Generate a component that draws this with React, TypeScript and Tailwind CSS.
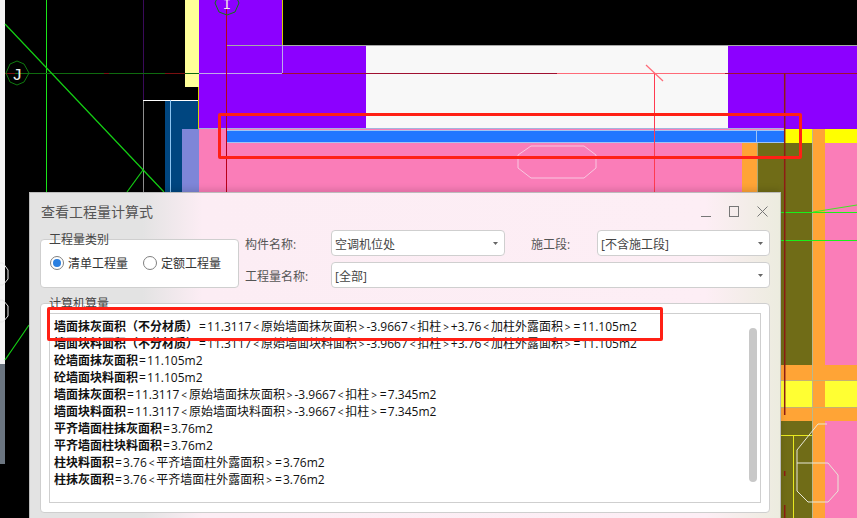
const FONT = "font-['Open_Sans','Noto_Sans_CJK_SC',sans-serif]";

const LINES: { label: string; body: string }[] = [
  { label: "墙面抹灰面积（不分材质）", body: "=11.3117<原始墙面抹灰面积>-3.9667<扣柱>+3.76<加柱外露面积>=11.105m2" },
  { label: "墙面块料面积（不分材质）", body: "=11.3117<原始墙面块料面积>-3.9667<扣柱>+3.76<加柱外露面积>=11.105m2" },
  { label: "砼墙面抹灰面积", body: "=11.105m2" },
  { label: "砼墙面块料面积", body: "=11.105m2" },
  { label: "墙面抹灰面积", body: "=11.3117<原始墙面抹灰面积>-3.9667<扣柱>=7.345m2" },
  { label: "墙面块料面积", body: "=11.3117<原始墙面块料面积>-3.9667<扣柱>=7.345m2" },
  { label: "平齐墙面柱抹灰面积", body: "=3.76m2" },
  { label: "平齐墙面柱块料面积", body: "=3.76m2" },
  { label: "柱块料面积", body: "=3.76<平齐墙面柱外露面积>=3.76m2" },
  { label: "柱抹灰面积", body: "=3.76<平齐墙面柱外露面积>=3.76m2" },
];

// CAD drawing behind the dialog
function CadCanvas() {
  return (
    <svg className="absolute inset-0" width="857" height="518" viewBox="0 0 857 518" shapeRendering="crispEdges">
      <rect x="0" y="0" width="857" height="518" fill="#000" />
      <rect x="0" y="0" width="5" height="364" fill="#f4f4f4" />
      <rect x="0" y="364" width="5" height="100" fill="#6b7580" />

      {/* fills */}
      <rect x="185" y="0" width="14" height="87" fill="#ffff99" />
      <rect x="199" y="0" width="83" height="46" fill="#8c00ff" />
      <rect x="199" y="45" width="167" height="84" fill="#8c00ff" />
      <rect x="366" y="45" width="362" height="84" fill="#f8f8f8" />
      <rect x="728" y="45" width="129" height="84" fill="#8c00ff" />
      <rect x="165" y="100" width="34" height="92" fill="#004680" />
      <rect x="182" y="129" width="17" height="63" fill="#7e86d8" />
      <rect x="199" y="129" width="658" height="389" fill="#fa7db8" />
      <rect x="742" y="143" width="15" height="375" fill="#ffa436" />
      <rect x="757" y="143" width="55" height="375" fill="#706c17" />
      <rect x="825" y="129" width="32" height="14" fill="#ffff00" />
      <rect x="785" y="129" width="27" height="14" fill="#ffff00" />
      <rect x="812" y="129" width="13" height="389" fill="#ffa436" />
      <rect x="742" y="365" width="115" height="15" fill="#ffa436" />
      <rect x="742" y="380" width="115" height="27" fill="#ffff33" />
      <rect x="812" y="380" width="13" height="27" fill="#ffa436" />
      <rect x="742" y="407" width="115" height="14" fill="#ffa436" />
      <rect x="227" y="130" width="558" height="13" fill="#a0c4f4" />
      <rect x="227" y="131" width="558" height="11" fill="#2176ff" />
      <rect x="756" y="130" width="1" height="13" fill="#a0c4f4" />
      <rect x="199" y="128" width="586" height="1" fill="#a3b3dc" />

      {/* outlines */}
      <g fill="none" strokeWidth="1">
        <path d="M46.5 0V192" stroke="#19e619" />
        <path d="M143.5 0V100" stroke="#3a0a5a" />
        <path d="M143.5 100V192" stroke="#8f8f8f" />
        <path d="M143 100.5H199" stroke="#ffffff" />
        <path d="M170.5 100V192" stroke="#8cc4f0" />
        <path d="M198.5 87V129" stroke="#d8d000" />
        <path d="M282.5 0V45" stroke="#d8d000" />
        <path d="M227 45.5H857" stroke="#a8a8a8" />
        <path d="M199 73.5H282V45" stroke="#c0a8e8" />
        <path d="M5 73.5H199" stroke="#0f6a0f" />
        <path d="M5 73.5H15M104 73.5H109M165 73.5H185" stroke="#7a1010" />
        <path d="M282 73.5H557" stroke="#a01030" />
        <path d="M557 73.5H725" stroke="#ff6a78" />
        <path d="M725 73.5H857" stroke="#a01030" />
        <path d="M226.5 0V192" stroke="#b80018" />
        <path d="M654.5 73V192" stroke="#ff3a50" />
        <path d="M757.5 143V518" stroke="#a8a878" />
        <path d="M812.5 129V518" stroke="#b8b890" />
        <path d="M742 380.5H857M742 407.5H857" stroke="#c8b070" />
        <path d="M781 212.5H857M781 240.5H857" stroke="#19f019" />
        <path d="M781 435.5H812M793.5 435V518" stroke="#e8e820" />
      </g>
      <path d="M784.7 73V415M784.7 471V476M784.7 505V518" fill="none" stroke="#8f1c14" strokeWidth="1.5" shapeRendering="geometricPrecision" />
      <g fill="none" shapeRendering="geometricPrecision">
        <path d="M5 24L164 192" stroke="#14d014" strokeWidth="1.2" />
        <path d="M143 170L127 192" stroke="#14d014" strokeWidth="1.2" />
        <path d="M29 325L5 360" stroke="#14d014" strokeWidth="1.2" />
        <path d="M813 212L857 205" stroke="#40e820" />
        <path d="M646 65L663 81" stroke="#ff6a78" strokeWidth="1.2" />
        <path d="M17 61L24 64L29 73L24 82L17 85L10 82L6 73L10 64Z" stroke="#0f7a0f" />
        <path d="M227 -9L235 -6L239 3L235 12L227 15L219 12L215 3L219 -6Z" stroke="#0f7a0f" />
        <path d="M531 146H584L596 155V168L584 178H531L518 168V155Z" stroke="#f8c8e0" />
        <path d="M827 424H818L797 450V491L808 502H828L838 491V475L828 463H797" stroke="#e8e8d8" />
        <path d="M0 263H3L8 270V279L3 285H0M0 300H3L8 306V316L3 322H0" stroke="#e8e8e8" />
      </g>
      <text x="17" y="80" textAnchor="middle" fontSize="17" fill="#ececec" fontFamily="Liberation Mono, monospace">J</text>
      <text x="227" y="9" textAnchor="middle" fontSize="14" fill="#ececec" fontFamily="Liberation Mono, monospace">I</text>
    </svg>
  );
}

function Select({ value, className }: { value: string; className: string }) {
  return (
    <div className={`flex h-[26px] items-center justify-between rounded-[4px] border border-[#cfcfcf] bg-white pl-[3px] pr-[6px] ${className}`}>
      <span className="pt-[3px] text-[12px] text-[#444]">{value}</span>
      <svg width="5" height="3" viewBox="0 0 5 3">
        <path d="M0 0H5L2.5 3Z" fill="#666" />
      </svg>
    </div>
  );
}

function Radio({ checked, label }: { checked?: boolean; label: string }) {
  return (
    <div className="flex items-center gap-[4px]">
      <span className="flex h-[14px] w-[14px] items-center justify-center rounded-full border border-[#808080] bg-white">
        {checked && <span className="h-[8px] w-[8px] rounded-full bg-[#2a7fe0]" />}
      </span>
      <span className="pt-[2px] text-[12px] text-[#333]">{label}</span>
    </div>
  );
}

// the operators in the formulas sit with air on both sides
function Formula({ text }: { text: string }) {
  return (
    <>
      {text.split(/([<>=])/).map((part, i) => {
        if (part === "<" || part === ">") {
          return <span key={i} className="px-[1.9px] text-[10px]">{part}</span>;
        }
        if (part === "=") {
          return <span key={i} className="px-[1.1px]">{part}</span>;
        }
        return <span key={i}>{part}</span>;
      })}
    </>
  );
}

function Dialog() {
  return (
    <div className={`${FONT} absolute left-[29px] top-[192px] flex h-[340px] w-[752px] flex-col border border-[#bcbcbc] bg-[linear-gradient(90deg,#e3e3e3_0%,#e3e3e3_15%,#fcedf4_23%,#fdeef5_90%,#ececdf_100%)] pl-[10px] pr-[10px] shadow-[0_-3px_6px_rgba(0,0,0,0.12)]`}>
      {/* Title bar */}
      <div className="flex h-[37px] shrink-0 items-center justify-between pr-[2px]">
        <span className="pl-[1px] text-[14px] text-[#555]">查看工程量计算式</span>
        <div className="flex items-center gap-[18px] text-[#777]">
          <svg width="10" height="12" viewBox="0 0 10 12" fill="none" stroke="currentColor">
            <path d="M0 10.5H10" />
          </svg>
          <svg width="10" height="11" viewBox="0 0 10 11" fill="none" stroke="currentColor">
            <rect x="0.5" y="0.5" width="9" height="10" />
          </svg>
          <svg width="11" height="11" viewBox="0 0 11 11" fill="none" stroke="currentColor">
            <path d="M0.5 0.5L10.5 10.5M10.5 0.5L0.5 10.5" />
          </svg>
        </div>
      </div>

      {/* Form */}
      <div className="flex shrink-0">
        <div className="relative mt-[9px] flex h-[49px] w-[199px] shrink-0 items-center gap-[15px] rounded-[4px] border border-[#cfcfcf] bg-white pb-[1px] pl-[9px]">
          <span className="absolute left-[8px] top-[-8px] text-[12px] leading-[16px] text-[#444]">工程量类别</span>
          <Radio checked label="清单工程量" />
          <Radio label="定额工程量" />
        </div>
        <div className="ml-[6px] flex flex-col gap-[6px]">
          <div className="flex items-center">
            <span className="w-[86px] pt-[3px] text-[12px] text-[#555]">构件名称:</span>
            <Select value="空调机位处" className="w-[174px]" />
            <span className="ml-[26px] w-[66px] pt-[3px] text-[12px] text-[#555]">施工段:</span>
            <Select value="[不含施工段]" className="w-[173px]" />
          </div>
          <div className="flex items-center">
            <span className="w-[86px] pt-[3px] text-[12px] text-[#555]">工程量名称:</span>
            <Select value="[全部]" className="w-[439px]" />
          </div>
        </div>
      </div>

      {/* Results */}
      <div className="relative mt-[15px] h-[210px] shrink-0 rounded-[4px] border border-[#cfcfcf] bg-white pb-[9px] pl-[8px] pr-[8px] pt-[9px]">
        <span className="absolute left-[8px] top-[-8px] text-[12px] leading-[16px] text-[#444]">计算机算量</span>
        <div className="relative h-[190px] border border-[#cfcfcf] pl-[4px] pt-[4px]">
          {LINES.map((line) => (
            <div key={line.label} className="h-[17px] whitespace-pre text-[12px] leading-[17px] text-[#111]">
              <span className="font-bold">{line.label}</span>
              <Formula text={line.body} />
            </div>
          ))}
          <div className="absolute right-[3px] top-[14px] h-[154px] w-[8px] rounded-full bg-[#c8c8c8]" />
        </div>
      </div>
    </div>
  );
}

export default function App() {
  return (
    <div className="relative h-[518px] w-[857px] overflow-hidden bg-black">
      <CadCanvas />
      <Dialog />
      {/* red annotation boxes */}
      <div className="absolute left-[218px] top-[113px] h-[46px] w-[584px] rounded-[2px] border-[3px] border-[#ff2015]" />
      <div className="absolute left-[47px] top-[307px] h-[34px] w-[616px] rounded-[2px] border-[3px] border-[#ff2015]" />
    </div>
  );
}
